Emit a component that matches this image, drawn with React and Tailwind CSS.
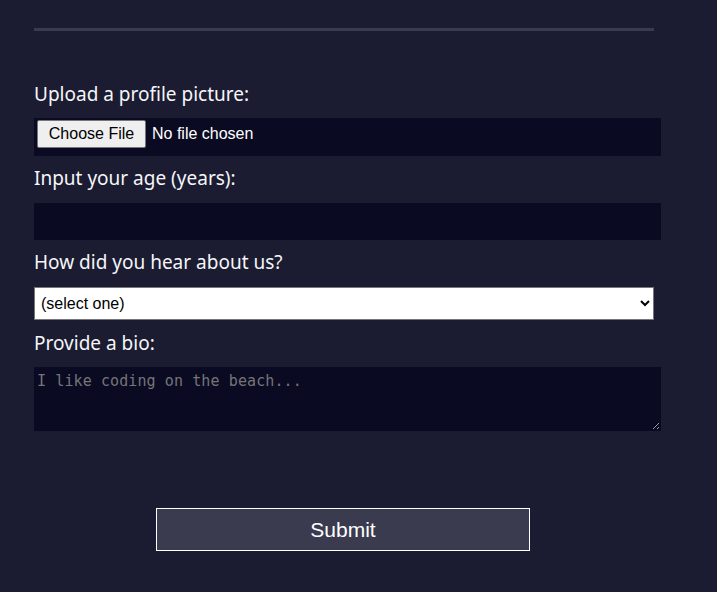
import { useState } from "react";

const labelCls = "block text-[19px] leading-[24px] text-[#f5f6f7]";

export default function App() {
  const [age, setAge] = useState("");
  const [source, setSource] = useState("");
  const [bio, setBio] = useState("");

  return (
    <div className="min-h-screen w-full bg-[#1b1b32] text-[#f5f6f7] font-['Noto_Sans',sans-serif]">
      <form className="pl-[34px] pt-[28px]" onSubmit={(e) => e.preventDefault()}>
        <hr className="w-[620px] h-[3px] border-0 bg-[#3b3b4f]" />

        {/* Profile picture */}
        <label className={`${labelCls} mt-[51px]`}>Upload a profile picture:</label>
        <div className="mt-[12px] w-[627px] h-[38px] bg-[#0a0a23] flex items-start pt-[2px] pl-[3px] font-['Liberation_Sans',Arial,sans-serif] text-[16px]">
          <span className="h-[28px] w-[109px] flex items-center justify-center bg-[#efefef] border border-[#767676] rounded-[2px] text-black">
            Choose File
          </span>
          <span className="ml-[6px] h-[28px] flex items-center text-white">No file chosen</span>
        </div>

        {/* Age */}
        <label className={`${labelCls} mt-[10px]`}>Input your age (years):</label>
        <input
          type="number"
          value={age}
          onChange={(e) => setAge(e.target.value)}
          className="block mt-[13px] w-[627px] h-[37px] bg-[#0a0a23] border border-[#0a0a23] text-white px-1 outline-none"
        />

        {/* Referrer */}
        <label className={`${labelCls} mt-[10px]`}>How did you hear about us?</label>
        <select
          value={source}
          onChange={(e) => setSource(e.target.value)}
          className="block mt-[13px] w-[620px] h-[33px] bg-white border border-[#767676] text-black text-[16px] font-['Liberation_Sans',Arial,sans-serif] pl-[2px]"
        >
          <option value="">(select one)</option>
          <option value="1">freeCodeCamp News</option>
          <option value="2">freeCodeCamp YouTube Channel</option>
          <option value="3">freeCodeCamp Forum</option>
          <option value="4">Other</option>
        </select>

        {/* Bio */}
        <label className={`${labelCls} mt-[11px]`}>Provide a bio:</label>
        <textarea
          rows={3}
          value={bio}
          onChange={(e) => setBio(e.target.value)}
          placeholder="I like coding on the beach..."
          className="block mt-[12px] w-[627px] h-[64px] bg-[#0a0a23] border border-[#0a0a23] text-white px-[2px] pt-[3px] text-[15px] leading-[20px] tracking-[0.1px] font-['DejaVu_Sans_Mono',monospace] placeholder:text-[#757575] outline-none"
        />

        <button
          type="submit"
          className="block mt-[77px] ml-[122px] w-[374px] h-[43px] bg-[#3b3b4f] border border-white text-white text-[21px] font-['Liberation_Sans',Arial,sans-serif]"
        >
          Submit
        </button>
      </form>
    </div>
  );
}
